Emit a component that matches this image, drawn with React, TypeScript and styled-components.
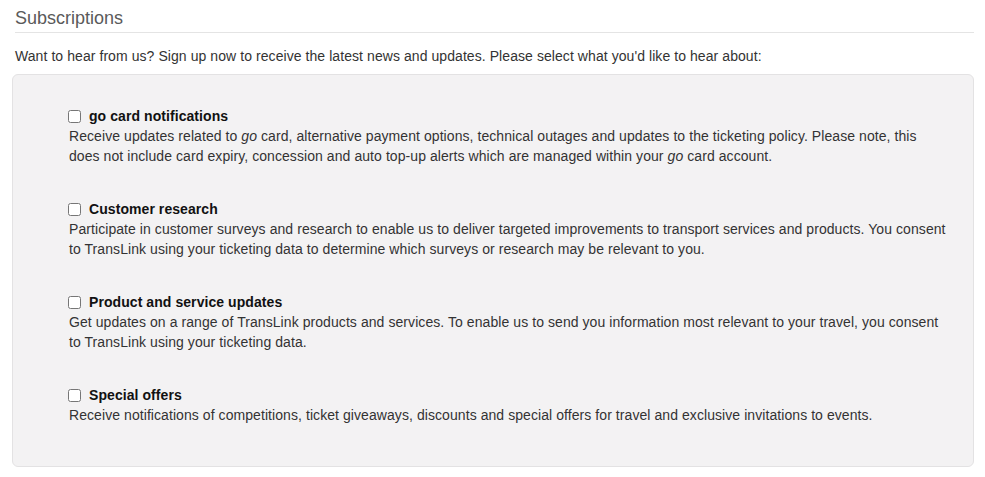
import React from 'react';
import styled, { createGlobalStyle } from 'styled-components';

const GlobalStyle = createGlobalStyle`
body {
    margin: 0;
    background: #ffffff;
    font-family: "Liberation Sans", Arial, sans-serif;
    color: #333333;
}
`;

const Page = styled.div`
padding: 0 11px 0 12px;
`;

const Heading = styled.h2`
margin: 8px 0 0 3px;
padding-bottom: 4px;
font-size: 18px;
line-height: 20px;
font-weight: 400;
color: #5a5a5a;
border-bottom: 1px solid #e4e4e4;
`;

const Intro = styled.p`
margin: 13px 0 8px 3px;
font-size: 14px;
line-height: 20px;
letter-spacing: 0.07px;
color: #333333;
`;

const Panel = styled.div`
display: flex;
flex-direction: column;
gap: 33px;
padding: 31px 25px 41px 55px;
background: #f3f2f3;
border: 1px solid #e3e2e3;
border-radius: 6px;
`;

const Option = styled.div`
display: flex;
flex-direction: column;
font-size: 14px;
line-height: 20px;
letter-spacing: 0.07px;
`;

const OptionLabel = styled.label`
display: flex;
align-items: center;
font-weight: 700;
color: #111111;
cursor: pointer;
`;

const Check = styled.input`
width: 13px;
height: 13px;
margin: 0 8px 0 0;
`;

const Description = styled.div`
padding-left: 1px;
color: #333333;
`;

interface OptionData {
    id: string;
    title: React.ReactNode;
    text: React.ReactNode;
}

const options: OptionData[] = [
    {
        id: 'gocard',
        title: 'go card notifications',
        text: (
            <>
                Receive updates related to <i>go</i> card, alternative payment options, technical outages and updates to the ticketing policy. Please note, this does not include card expiry, concession and auto top-up alerts which are managed within your <i>go</i> card account.
            </>
        ),
    },
    {
        id: 'research',
        title: 'Customer research',
        text: 'Participate in customer surveys and research to enable us to deliver targeted improvements to transport services and products. You consent to TransLink using your ticketing data to determine which surveys or research may be relevant to you.',
    },
    {
        id: 'updates',
        title: 'Product and service updates',
        text: 'Get updates on a range of TransLink products and services. To enable us to send you information most relevant to your travel, you consent to TransLink using your ticketing data.',
    },
    {
        id: 'offers',
        title: 'Special offers',
        text: 'Receive notifications of competitions, ticket giveaways, discounts and special offers for travel and exclusive invitations to events.',
    },
];

const App = () => {
    const [checked, setChecked] = React.useState<Record<string, boolean>>({});

    return (
        <Page>
            <GlobalStyle />
            <Heading>Subscriptions</Heading>
            <Intro>Want to hear from us? Sign up now to receive the latest news and updates. Please select what you'd like to hear about:</Intro>
            <Panel>
                {options.map((o) => (
                    <Option key={o.id}>
                        <OptionLabel>
                            <Check
                                type="checkbox"
                                checked={!!checked[o.id]}
                                onChange={() => setChecked({ ...checked, [o.id]: !checked[o.id] })}
                            />
                            {o.title}
                        </OptionLabel>
                        <Description>{o.text}</Description>
                    </Option>
                ))}
            </Panel>
        </Page>
    );
};

export default App;
